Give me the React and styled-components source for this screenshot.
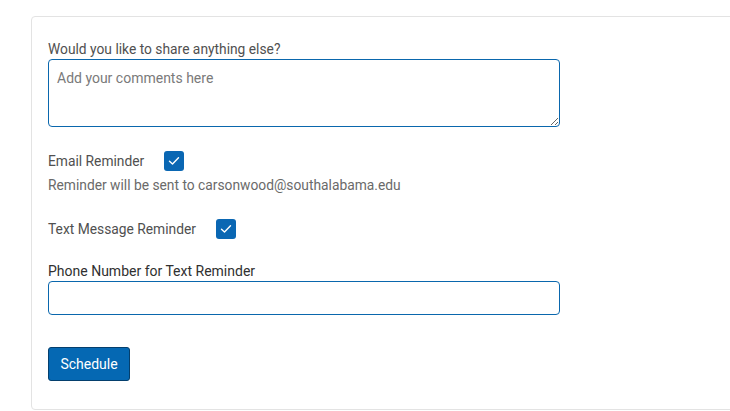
import React from "react";
import styled, { createGlobalStyle } from "styled-components";

const Global = createGlobalStyle`
  html, body { margin: 0; padding: 0; background: #fff; }
  body { font-family: Roboto, "Liberation Sans", Arial, sans-serif; color: #333; }
  * { box-sizing: border-box; }
`;

const Page = styled.div`
  padding: 16px 0 0 31px;
  width: 730px;
  height: 411px;
  overflow: hidden;
`;

const Card = styled.div`
  width: 720px;
  height: 394px;
  border: 1px solid #e3e3e3;
  border-radius: 4px;
  padding: 22px 16px 0 16px;
  display: flex;
  flex-direction: column;
`;

const Label = styled.label`
  display: block;
  font-size: ${(p) => (p.$strong ? "14px" : "13.8px")};
  line-height: 20px;
  color: ${(p) => (p.$strong ? "#303030" : "#505050")};
`;

const TextArea = styled.textarea`
  display: block;
  width: 512px;
  height: 68px;
  border: 1px solid #0a67ad;
  border-radius: 4px;
  padding: 8px 8px;
  font-family: Roboto, "Liberation Sans", Arial, sans-serif;
  font-size: 14px;
  line-height: 20px;
  resize: vertical;
  outline: none;
  &::placeholder { color: #7a7a7a; }
`;

const Row = styled.div`
  display: flex;
  align-items: center;
  gap: ${(p) => p.$gap}px;
  height: 20px;
  margin-top: ${(p) => p.$mt}px;
`;

const RowText = styled.span`
  font-size: 13.8px;
  color: #505050;
`;

const Check = styled.span`
  width: 20px;
  height: 20px;
  border-radius: 3px;
  background: #0a67b3;
  display: flex;
  align-items: center;
  justify-content: center;
`;

const Note = styled.div`
  font-size: 13.8px;
  line-height: 20px;
  color: #6a6a6a;
  margin-top: 4px;
`;

const Input = styled.input`
  display: block;
  width: 512px;
  height: 34px;
  border: 1px solid #0a67ad;
  border-radius: 4px;
  outline: none;
`;

const Button = styled.button`
  margin-top: 32px;
  align-self: flex-start;
  width: 82px;
  height: 34px;
  background: #0568b3;
  color: #fff;
  border: 1px solid #043f6d;
  border-radius: 3px;
  font-family: Roboto, "Liberation Sans", Arial, sans-serif;
  font-size: 14px;
  cursor: pointer;
`;

const Tick = () => (
  <svg width="12" height="10" viewBox="0 0 12 10" fill="none">
    <path d="M1.5 5.2 L4.5 8 L10.5 1.8" stroke="#fff" strokeWidth="1.4" strokeLinecap="round" strokeLinejoin="round" />
  </svg>
);

export default function App() {
  return (
    <>
      <Global />
      <Page>
        <Card>
          <Label>Would you like to share anything else?</Label>
          <TextArea placeholder="Add your comments here" />
          <Row $gap={20} $mt={24}>
            <RowText>Email Reminder</RowText>
            <Check><Tick /></Check>
          </Row>
          <Note>Reminder will be sent to carsonwood@southalabama.edu</Note>
          <Row $gap={20} $mt={24}>
            <RowText>Text Message Reminder</RowText>
            <Check><Tick /></Check>
          </Row>
          <Row $gap={0} $mt={22}>
            <Label $strong>Phone Number for Text Reminder</Label>
          </Row>
          <Input />
          <Button>Schedule</Button>
        </Card>
      </Page>
    </>
  );
}
